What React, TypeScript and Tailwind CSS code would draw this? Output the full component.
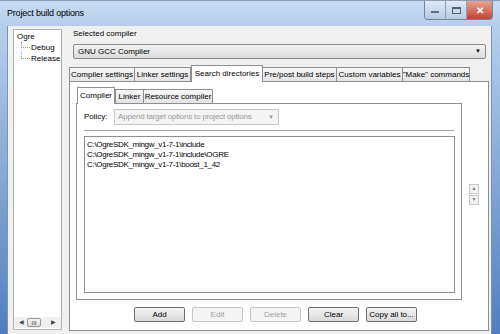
import React from "react";

const ui = { fontFamily: '"Liberation Sans", Arial, sans-serif' };

function WinButtons() {
  return (
    <div className="flex self-start h-[19px] rounded-b-[4px] overflow-hidden border border-t-0 border-[#6f86a6]">
      <div className="w-[21px] bg-gradient-to-b from-[#dfe9f5] to-[#b6cbe4] border-r border-[#8aa1bf] flex items-center justify-center">
        <div className="w-[8px] h-[2px] bg-[#5f6f86] mt-[3px]" />
      </div>
      <div className="w-[21px] bg-gradient-to-b from-[#dfe9f5] to-[#b6cbe4] border-r border-[#8aa1bf] flex items-center justify-center">
        <div className="w-[9px] h-[7px] border border-[#4f5f76] border-t-2" />
      </div>
      <div className="w-[25px] bg-gradient-to-b from-[#e8a393] to-[#c2412a] flex items-center justify-center text-white text-[10px] font-bold">
        ✕
      </div>
    </div>
  );
}

function Tab({ label, active, w }: { label: string; active?: boolean; w: string }) {
  return (
    <div
      className={
        active
          ? `${w} h-[17px] -mb-px bg-white border border-b-0 border-[#8c8e94] flex items-center justify-center relative z-10`
          : `${w} h-[14px] bg-gradient-to-b from-[#f7f7f7] to-[#e3e3e3] border border-b-0 border-[#8c8e94] -ml-px flex items-center justify-center`
      }
    >
      {label}
    </div>
  );
}

function Button({ label, disabled }: { label: string; disabled?: boolean }) {
  return (
    <div
      className={
        disabled
          ? "w-[51px] h-[15px] rounded-[2px] border border-[#c5c5c5] bg-[#f4f4f4] text-[#a3a3a3] flex items-center justify-center"
          : "w-[51px] h-[15px] rounded-[2px] border border-[#707070] bg-gradient-to-b from-[#f4f4f4] to-[#d9d9d9] flex items-center justify-center"
      }
    >
      {label}
    </div>
  );
}

export default function App() {
  return (
    <div className="w-[500px] h-[334px] overflow-hidden flex flex-col whitespace-nowrap bg-gradient-to-b from-[#c0d6ee] to-[#4f7fc0] text-[8px] text-black" style={ui}>
      {/* title bar */}
      <div className="h-[26px] flex shrink-0 pl-[7px] pr-[7px] bg-gradient-to-b from-[#c9dcf1] to-[#b4cdea] border-t border-[#8b9bb0]">
        <div className="text-[9px] tracking-[-0.2px] text-black pt-[6px]">Project build options</div>
        <div className="ml-auto">
          <WinButtons />
        </div>
      </div>

      {/* body */}
      <div className="flex-1 flex ml-[7px] mr-[8px] bg-[#f0f0f0] border-l border-r border-[#7c93b5]">
        {/* tree */}
        <div className="mt-[3px] ml-[5px] mb-[4px] w-[49px] bg-white border border-[#adb2b8] flex flex-col">
          <div className="pt-[1px] pl-[3px] leading-[11px]">
            <div>Ogre</div>
            <div className="flex">
              <div className="w-[9px] ml-[4px] border-l border-b border-dotted border-[#9a9a9a] h-[6px]" />
              <span className="ml-[1px]">Debug</span>
            </div>
            <div className="flex -mt-[1px]">
              <div className="w-[9px] ml-[4px] border-l border-b border-dotted border-[#9a9a9a] h-[7px]" />
              <span className="ml-[1px] mt-[1px]">Release</span>
            </div>
          </div>
          <div className="mt-auto h-[11px] mb-[1px] flex items-center px-[5px] bg-[#f0f0f0] text-[#444]">
            <span className="text-[6px]">◀</span>
            <div className="ml-[3px] w-[14px] h-[9px] rounded-[2px] border border-[#9a9a9a] bg-gradient-to-b from-[#f4f4f4] to-[#dadada] text-[6px] leading-[8px] text-center">III</div>
            <span className="ml-auto text-[6px]">▶</span>
          </div>
        </div>

        {/* right side */}
        <div className="flex-1 flex flex-col pl-[7px] pr-[2px]">
          <div className="pl-[4px] pt-[3px] leading-[10px]">Selected compiler</div>
          <div className="ml-[4px] mr-[3px] mt-[5px] h-[15px] rounded-[2px] border border-[#8a8a8a] bg-gradient-to-b from-[#f3f3f3] to-[#dcdcdc] flex items-center pl-[4px] pr-[4px]">
            <span>GNU GCC Compiler</span>
            <span className="ml-auto text-[6px]">▼</span>
          </div>

          {/* outer tabs */}
          <div className="mt-[6px] flex items-end pl-[1px] leading-[10px]">
            <Tab label="Compiler settings" w="w-[66px]" />
            <Tab label="Linker settings" w="w-[57px]" />
            <Tab label="Search directories" w="w-[72px]" active />
            <Tab label="Pre/post build steps" w="w-[75px]" />
            <Tab label="Custom variables" w="w-[67px]" />
            <Tab label={'"Make" commands'} w="w-[68px]" />
          </div>
          <div className="flex-1 bg-white border border-[#8c8e94] flex flex-col pl-[6px] pr-[8px] pt-[5px] mb-[3px]">
            <div className="flex">
              <div className="flex-1 flex flex-col">
                {/* inner tabs */}
                <div className="flex items-end pl-[1px] leading-[10px]">
                  <Tab label="Compiler" w="w-[38px]" active />
                  <div className="ml-px flex">
                    <Tab label="Linker" w="w-[29px]" />
                    <Tab label="Resource compiler" w="w-[70px]" />
                  </div>
                </div>
                <div className="h-[197px] border border-[#8c8e94] flex flex-col pl-[7px] pr-[6px] pt-[5px]">
                  <div className="flex items-center h-[16px]">
                    <span className="w-[30px]">Policy:</span>
                    <div className="w-[165px] h-[16px] border border-[#c8c8c8] bg-[#f4f4f4] text-[#9a9a9a] flex items-center pl-[3px] pr-[4px] overflow-hidden">
                      <span className="tracking-[-0.2px]">Append target options to project options</span>
                      <span className="ml-auto text-[6px]">▼</span>
                    </div>
                  </div>
                  <div className="mt-[5px] mr-[1px] h-[2px] border-t border-[#a0a0a0] border-b border-b-white bg-[#dcdcdc]" />
                  <div className="mt-[4px] h-[157px] border border-[#8c8e94] bg-white pl-[2px] pt-[3px] leading-[10px] tracking-[-0.3px]">
                    <div>C:\OgreSDK_mingw_v1-7-1\include</div>
                    <div>C:\OgreSDK_mingw_v1-7-1\include\OGRE</div>
                    <div>C:\OgreSDK_mingw_v1-7-1\boost_1_42</div>
                  </div>
                </div>
              </div>
              {/* up/down */}
              <div className="w-[18px] flex flex-col pl-[7px] pt-[97px] text-[5px] text-[#777]">
                <div className="w-[10px] h-[10px] border border-[#c8c8c8] bg-[#f2f2f2] flex items-center justify-center">▲</div>
                <div className="w-[10px] h-[10px] border border-[#c8c8c8] bg-[#f2f2f2] flex items-center justify-center mt-[1px]">▼</div>
              </div>
            </div>
            <div className="mt-[7px] flex gap-[7px] pl-[58px]">
              <Button label="Add" />
              <Button label="Edit" disabled />
              <Button label="Delete" disabled />
              <Button label="Clear" />
              <Button label="Copy all to..." />
            </div>
          </div>
        </div>
      </div>
    </div>
  );
}
